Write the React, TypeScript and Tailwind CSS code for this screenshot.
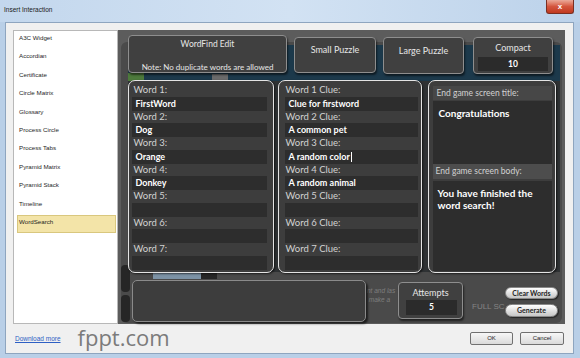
import React from 'react';

const items = [
  'A3C Widget',
  'Accordian',
  'Certificate',
  'Circle Matrix',
  'Glossary',
  'Process Circle',
  'Process Tabs',
  'Pyramid Matrix',
  'Pyramid Stack',
  'Timeline',
  'WordSearch',
];

const words = ['FirstWord', 'Dog', 'Orange', 'Donkey', '', '', ''];
const clues = ['Clue for firstword', 'A common pet', 'A random color', 'A random animal', '', '', ''];

const boxCls =
  "rounded-[4px] border border-[#8e8e8e] bg-[#404040] shadow-[1px_2px_2px_rgba(0,0,0,0.55)] font-['Lato',sans-serif] text-[#e6e6e6]";
const panelCls =
  "h-[193px] rounded-[7px] border-[1.5px] border-[#e4e4e4] bg-[#3d3d3d] shadow-[1px_1px_2px_rgba(0,0,0,0.6)] font-['Lato',sans-serif]";

function TitleBar() {
  return (
    <div className="h-[22px] flex items-start justify-between pl-[4px] pr-[6px] bg-gradient-to-r from-[#c3d7ed] via-[#d2e2f3] to-[#bcd2ea]">
      <span className="mt-[5px] text-[6.5px] leading-[10px] text-[#1a1a1a]">Insert Interaction</span>
      <div className="w-[28px] h-[14px] rounded-b-[3px] border border-t-0 border-[#7a2f22] bg-gradient-to-b from-[#eaa999] via-[#d4553d] to-[#c0391f] flex items-center justify-center text-white text-[8px] font-bold leading-none">
        x
      </div>
    </div>
  );
}

function FieldPanel({
  title,
  values,
  width,
  lbl,
  inp,
}: {
  title: (i: number) => string;
  values: string[];
  width: string;
  lbl: string;
  inp: string;
}) {
  return (
    <div className={`${panelCls} ${width} pt-[3px]`}>
      {values.map((v, i) => (
        <div key={i}>
          <div className={`h-[12.5px] text-[9.5px] leading-[12.5px] text-[#d2d2d2] ${lbl}`}>{title(i)}</div>
          <div className={`h-[14px] bg-[#2d2d2d] pl-[4px] flex items-center text-[9px] font-bold text-white ${inp}`}>
            {v}
            {v === 'A random color' && <span className="inline-block w-[1px] h-[10px] bg-white ml-[1px]" />}
          </div>
        </div>
      ))}
    </div>
  );
}

export default function App() {
  return (
    <div className="w-[580px] h-[358px] overflow-hidden flex flex-col bg-[#b9cfe7] font-['Liberation_Sans',Arial,sans-serif]">
      <TitleBar />
      <div className="flex-1 ml-[5px] mr-[6px] mb-[4px] bg-[#f0f0f0] border border-[#8ea5bf] flex flex-col">
        <div className="flex pt-[7px] pl-[7px]">
          <div className="w-[105px] h-[294px] bg-white border border-[#b8b8b8] flex flex-col">
            {items.map((it) => (
              <div
                key={it}
                className={
                  it === 'WordSearch'
                    ? 'h-[18.4px] ml-[3px] mr-[1.5px] pl-[1px] pt-[2px] bg-[#f3e4a8] border border-[#d9c77e] text-[6.2px] leading-[8px] text-[#1e1e1e]'
                    : 'h-[18.4px] pl-[5px] pt-[3px] text-[6.2px] leading-[8px] text-[#1e1e1e]'
                }
              >
                {it}
              </div>
            ))}
          </div>

          <div className="relative w-[447px] h-[294px] bg-[#5c5c5c]">
            {/* game preview behind the editor */}
            <div className="absolute left-[3px] top-[12px] w-[441px] h-[281px] rounded-[6px] bg-[#4a4a4a]" />
            <div className="absolute left-[10px] top-[15px] w-[432px] h-[36px] bg-[#1c394b]" />
            <div className="absolute left-[10px] top-[43px] w-[16px] h-[8px] bg-[#4d7a3c]" />
            <div className="absolute left-[94px] top-[44px] w-[16px] h-[6px] bg-[#6a6a6a]" />
            <div className="absolute left-[10px] top-[51px] w-[432px] h-[191px] bg-[#2f3234]" />
            <div className="absolute left-[35px] top-[242px] w-[48px] h-[7px] bg-[#7d93a6]" />
            <div className="absolute left-[83px] top-[242px] w-[16px] h-[7px] bg-[#262626]" />
            <div className="absolute left-[3px] top-[235px] w-[9px] h-[27px] rounded-[4px] bg-[#262626]" />
            <div className="absolute left-[3px] top-[265px] w-[9px] h-[27px] rounded-[4px] bg-[#262626]" />
            <div className="absolute left-[249px] top-[256px] text-[6.5px] leading-[9px] italic text-[#7e7e7e]">
              nt and las
              <br />
              &nbsp;make a
            </div>
            <div className="absolute left-[354px] top-[272px] text-[8px] leading-[10px] text-[#858585]">FULL SC</div>

            <div className="relative flex flex-col pl-[10px] pt-[5px]">
              {/* top row */}
              <div className="flex items-start">
                <div className={`${boxCls} w-[159px] h-[38px] flex flex-col items-center pt-[2px]`}>
                  <span className="text-[8.5px] leading-[12px]">WordFind Edit</span>
                  <span className="mt-[11px] text-[8px] leading-[12px]">Note: No duplicate words are allowed</span>
                </div>
                <div className={`${boxCls} ml-[7px] mt-[2px] w-[82px] h-[36px] flex justify-center pt-[6px] text-[9px] leading-[12px]`}>
                  Small Puzzle
                </div>
                <div className={`${boxCls} ml-[7px] mt-[2px] w-[81px] h-[37px] flex justify-center pt-[7px] text-[9px] leading-[12px]`}>
                  Large Puzzle
                </div>
                <div className={`${boxCls} ml-[9px] mt-[2px] w-[80px] h-[37px] flex flex-col pt-[4px]`}>
                  <span className="text-center text-[9px] leading-[12px]">Compact</span>
                  <div className="mt-[3px] mx-[4px] h-[14px] bg-[#2b2b2b] flex items-center justify-center text-[8.5px] font-bold text-white">
                    10
                  </div>
                </div>
              </div>

              {/* editor panels */}
              <div className="flex mt-[6px]">
                <FieldPanel
                  title={(i) => `Word ${i + 1}:`}
                  values={words}
                  width="w-[146px]"
                  lbl="pl-[4.5px]"
                  inp="ml-[2.5px] mr-[6.5px]"
                />
                <FieldPanel
                  title={(i) => `Word ${i + 1} Clue:`}
                  values={clues}
                  width="ml-[4px] w-[144px]"
                  lbl="pl-[6.5px]"
                  inp="ml-[5.5px] mr-[3.5px]"
                />
                <div className={`${panelCls} ml-[6px] w-[128px] px-[3.5px] pt-[4.5px]`}>
                  <div className="h-[14px] bg-[#474747] pl-[4px] text-[8.5px] leading-[14px] text-[#d2d2d2]">
                    End game screen title:
                  </div>
                  <div className="mt-[1px] h-[63px] bg-[#2d2d2d] pl-[6px] pt-[6px] text-[10px] leading-[12px] font-bold text-white">
                    Congratulations
                  </div>
                  <div className="h-[15px] bg-[#4d4d4d] pl-[3px] text-[8.5px] leading-[15px] text-[#d2d2d2]">
                    End game screen body:
                  </div>
                  <div className="mt-[2px] h-[90px] bg-[#2d2d2d] pl-[5px] pt-[6px] text-[10px] leading-[12px] font-bold text-white">
                    You have finished the
                    <br />
                    word search!
                  </div>
                </div>
              </div>

              {/* bottom row */}
              <div className="flex items-start mt-[7px]">
                <div className="ml-[4px] w-[234px] h-[42px] rounded-[5px] border border-[#8a8a8a] bg-[#3d3d3d] shadow-[2px_2px_2px_rgba(0,0,0,0.6)]" />
                <div className={`${boxCls} ml-[32px] mt-[2px] w-[65px] h-[37px] flex flex-col pt-[4px]`}>
                  <span className="text-center text-[9px] leading-[12px]">Attempts</span>
                  <div className="mt-[1px] ml-[7px] w-[51px] h-[15px] bg-[#2b2b2b] flex items-center justify-center text-[8.5px] font-bold text-white">
                    5
                  </div>
                </div>
                <div className="ml-[42px] mt-[7px] flex flex-col gap-[5px] font-['Lato',sans-serif]">
                  <div className="w-[53px] h-[12px] rounded-full border border-[#8a8a8a] bg-gradient-to-b from-white to-[#c6c6c6] shadow-[1px_1px_1px_rgba(0,0,0,0.5)] flex items-center justify-center text-[7px] font-bold text-[#262626]">
                    Clear Words
                  </div>
                  <div className="w-[53px] h-[13px] rounded-full border border-[#8a8a8a] bg-gradient-to-b from-white to-[#c6c6c6] shadow-[1px_1px_1px_rgba(0,0,0,0.5)] flex items-center justify-center text-[7px] font-bold text-[#262626]">
                    Generate
                  </div>
                </div>
              </div>
            </div>
          </div>
        </div>

        {/* footer */}
        <div className="flex-1 flex items-center pl-[9px] pr-[9px]">
          <span className="text-[6.5px] text-[#2d5fc4] underline">Download more</span>
          <span className="ml-[17px] -mt-[3px] text-[22px] leading-none text-[#7b7b7b] font-['Open_Sans',sans-serif]">fppt.com</span>
          <div className="ml-auto flex gap-[7px]">
            <div className="w-[43px] h-[13px] rounded-[2px] border border-[#707070] bg-gradient-to-b from-[#f7f7f7] to-[#dadada] flex items-center justify-center text-[6px] text-[#1e1e1e]">
              OK
            </div>
            <div className="w-[44px] h-[13px] rounded-[2px] border border-[#707070] bg-gradient-to-b from-[#f7f7f7] to-[#dadada] flex items-center justify-center text-[6px] text-[#1e1e1e]">
              Cancel
            </div>
          </div>
        </div>
      </div>
    </div>
  );
}
